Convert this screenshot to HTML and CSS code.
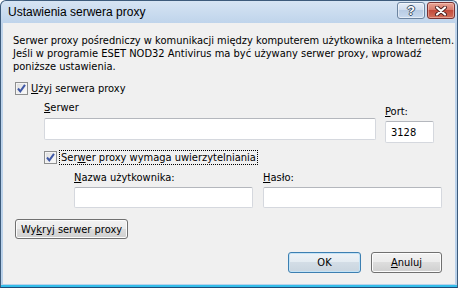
FILE: index.html
```html
<html lang="pl">
  <head>
    <meta charset="UTF-8" />
    <title>Ustawienia serwera proxy</title>
    <link rel="stylesheet" href="styles.css">
  </head>
  <body>
    <div class="window">
      <div class="titlebar">
        <span class="title">Ustawienia serwera proxy</span>
        <div class="caption_btns">
          <span class="cap_btn help">?</span>
          <span class="cap_btn close">
            <svg width="14" height="10" viewBox="0 0 14 10">
              <path d="M3 1.5 L11 8.5 M11 1.5 L3 8.5" stroke="#4a2020" stroke-width="4" stroke-linecap="round" fill="none" />
              <path d="M3 1.5 L11 8.5 M11 1.5 L3 8.5" stroke="#fff" stroke-width="2.2" stroke-linecap="round" fill="none" />
            </svg>
          </span>
        </div>
      </div>

      <div class="client">
        <p class="intro">Serwer proxy pośredniczy w komunikacji między komputerem użytkownika a Internetem.<br>Jeśli w programie ESET NOD32 Antivirus ma być używany serwer proxy, wprowadź<br>poniższe ustawienia.</p>

        <div class="check use_proxy">
          <span class="box">
            <svg width="11" height="11" viewBox="0 0 11 11"><path d="M2 5.5 L4.3 8.3 L9 1.8" stroke="#3f58a6" stroke-width="2" fill="none" /></svg>
          </span>
          <span><u>U</u>żyj serwera proxy</span>
        </div>

        <div class="server_row">
          <div class="field server">
            <span class="label"><u>S</u>erwer</span>
            <input class="edit" type="text" value="" />
          </div>
          <div class="field port">
            <span class="label"><u>P</u>ort:</span>
            <input class="edit" type="text" value="3128" />
          </div>
        </div>

        <div class="check auth">
          <span class="box">
            <svg width="11" height="11" viewBox="0 0 11 11"><path d="M2 5.5 L4.3 8.3 L9 1.8" stroke="#3f58a6" stroke-width="2" fill="none" /></svg>
          </span>
          <span class="focus">Ser<u>w</u>er proxy wymaga uwierzytelniania</span>
        </div>

        <div class="auth_row">
          <div class="field">
            <span class="label"><u>N</u>azwa użytkownika:</span>
            <input class="edit" type="text" value="" />
          </div>
          <div class="field">
            <span class="label"><u>H</u>asło:</span>
            <input class="edit" type="password" value="" />
          </div>
        </div>

        <button class="btn detect">Wy<u>k</u>ryj serwer proxy</button>

        <div class="footer">
          <button class="btn ok">OK</button>
          <button class="btn cancel"><u>A</u>nuluj</button>
        </div>
      </div>
    </div>
  </body>
</html>
```

FILE: styles.css
```css
* {
  padding: 0;
  margin: 0;
  box-sizing: border-box;
}

body {
  width: 458px;
  height: 288px;
  overflow: hidden;
  background: #fff;
  font-family: "DejaVu Sans Condensed", "Liberation Sans", sans-serif;
  font-size: 11px;
  color: #000;
}

.window {
  width: 458px;
  height: 288px;
  display: flex;
  flex-direction: column;
  padding: 0 2px 3px 2px;
  border: 1px solid #3d5b7b;
  border-bottom-color: #1c4a78;
  border-radius: 6px 6px 0 0;
  background:
    linear-gradient(to top, #33bde9 0, #33bde9 2px, transparent 2px),
    linear-gradient(#d6e4f3, #bfd4eb 22px, #b9d1ea);
}

/* title bar */
.titlebar {
  height: 22px;
  display: flex;
  align-items: center;
  padding-left: 5px;
}
.title {
  font-family: "Liberation Sans", sans-serif;
  font-size: 12px;
  color: #000;
}
.caption_btns {
  margin-left: auto;
  align-self: flex-start;
  margin-top: 1px;
  display: flex;
  gap: 2px;
}
.cap_btn {
  width: 28px;
  height: 17px;
  display: flex;
  justify-content: center;
  align-items: center;
  border-radius: 3px;
}
.help {
  border: 1px solid #6c84a0;
  background: linear-gradient(#e6eef8, #cedcee 50%, #b9cce4 50%, #c9daee);
  box-shadow: inset 0 0 0 1px rgba(255, 255, 255, 0.5);
  font-family: "Liberation Sans", sans-serif;
  font-weight: bold;
  font-size: 13px;
  color: #fff;
  text-shadow: 1px 0 #3b4d63, -1px 0 #3b4d63, 0 1px #3b4d63, 0 -1px #3b4d63;
}
.close {
  border: 1px solid #783232;
  background: linear-gradient(#e9a596, #d57465 50%, #c24a3b 50%, #d2705b);
  box-shadow: inset 0 0 0 1px rgba(255, 220, 210, 0.45);
}

/* client area */
.client {
  flex: 1;
  background: #f0f0f0;
  display: flex;
  flex-direction: column;
  align-items: flex-start;
}
.intro {
  margin: 11px 0 0 10px;
  line-height: 13px;
  white-space: nowrap;
}

.check {
  display: flex;
  align-items: center;
  gap: 3px;
  line-height: 13px;
  white-space: nowrap;
}
.box {
  width: 13px;
  height: 13px;
  border: 1px solid #8e8f8f;
  background: linear-gradient(135deg, #dcdcdc, #fdfdfd);
  box-shadow: inset 0 0 0 1px #f4f4f4;
  display: flex;
  justify-content: center;
  align-items: center;
}
.use_proxy {
  margin: 9px 0 0 12px;
}
.auth {
  margin: 8px 0 0 41px;
}
.focus {
  outline: 1px dotted #000;
  padding: 0 1px;
}

.label {
  display: block;
  line-height: 13px;
  height: 13px;
  white-space: nowrap;
}
.edit {
  display: block;
  width: 100%;
  background: #fff;
  border: 1px solid #d5d8de;
  border-top-color: #b4b7bd;
  border-radius: 2px;
  font-family: inherit;
  font-size: 11px;
  padding: 0 5px;
  color: #000;
  outline: none;
}

.server_row {
  display: flex;
  gap: 9px;
  margin: 6px 0 0 41px;
}
.server {
  width: 332px;
}
.server .edit {
  margin-top: 4px;
  height: 22px;
}
.port {
  width: 49px;
  padding-top: 4px;
}
.port .edit {
  margin-top: 3px;
  height: 22px;
}

.auth_row {
  display: flex;
  gap: 10px;
  margin: 7px 0 0 71px;
}
.auth_row .field {
  width: 179px;
}
.auth_row .edit {
  margin-top: 3px;
  height: 21px;
}

.btn {
  font-family: inherit;
  font-size: 11px;
  color: #000;
  border: 1px solid #707070;
  border-radius: 3px;
  background: linear-gradient(#f2f2f2, #ebebeb 50%, #dddddd 50%, #cfcfcf);
  box-shadow: inset 0 0 0 1px #fcfcfc;
}
.detect {
  margin: 11px 0 0 12px;
  width: 113px;
  height: 20px;
}
.footer {
  margin-top: 13px;
  align-self: stretch;
  display: flex;
  justify-content: flex-end;
  gap: 10px;
  padding-right: 13px;
}
.ok {
  width: 73px;
  height: 21px;
  border-color: #3c7fb1;
  box-shadow: inset 0 0 0 1px #c4e3f6;
  background: linear-gradient(#eef3f7, #e3ebf1 50%, #d3dde6 50%, #c9d5df);
}
.cancel {
  width: 71px;
  height: 21px;
}
```
